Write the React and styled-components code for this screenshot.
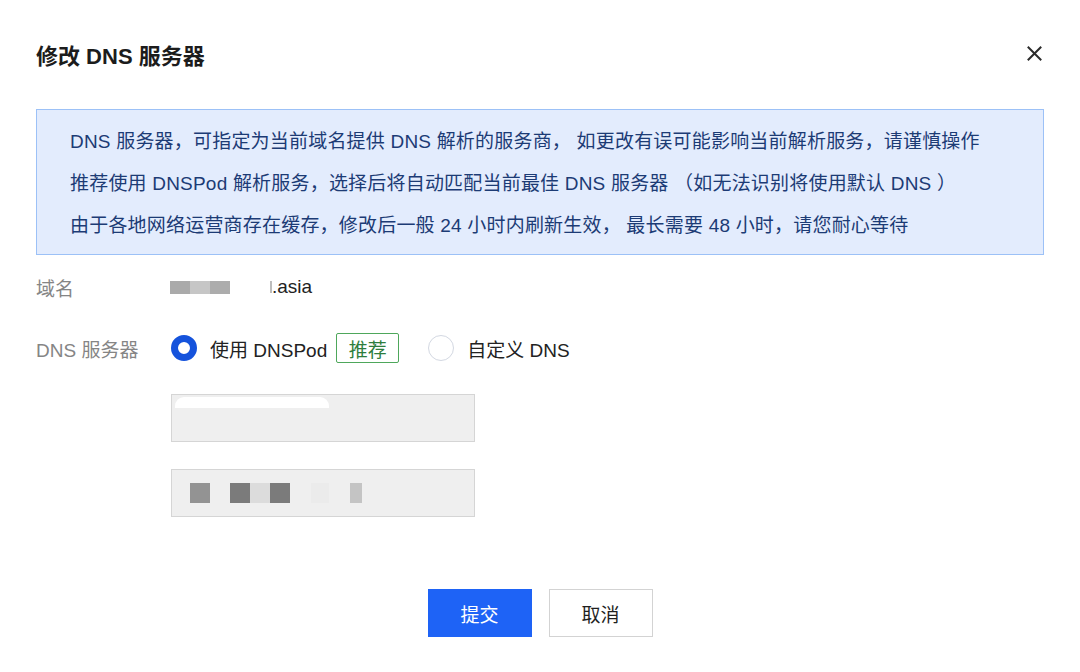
import React from "react";
import styled, { createGlobalStyle } from "styled-components";

const Global = createGlobalStyle`
  html, body { margin: 0; padding: 0; background: #fff; }
  body {
    font-family: "Liberation Sans", "Noto Sans CJK SC", sans-serif;
    color: #1f1f1f;
  }
`;

const Dialog = styled.div`
  width: 1080px;
  height: 672px;
  box-sizing: border-box;
  padding: 0 36px;
  display: flex;
  flex-direction: column;
`;

const Header = styled.div`
  height: 109px;
  display: flex;
  align-items: center;
  justify-content: space-between;
  padding-bottom: 2px;
  box-sizing: border-box;
`;

const Title = styled.h1`
  margin: 0;
  font-size: 22px;
  font-weight: 700;
  color: #1c1c1c;
`;

const Close = styled.button`
  border: 0;
  background: none;
  padding: 0;
  width: 16px;
  height: 16px;
  margin-right: 2px;
  display: flex;
  align-items: center;
  justify-content: center;
  cursor: pointer;
`;

const Notice = styled.div`
  border: 1px solid #9cc1f7;
  background: #e3ecfd;
  padding: 11px 33px 7px;
  color: #1c3b75;
  font-size: 19px;
  line-height: 42px;
  letter-spacing: 0.2px;
`;

const Line = styled.div`
  white-space: nowrap;
`;

const Form = styled.div`
  display: flex;
  flex-direction: column;
  margin-top: 14px;
`;

const Row = styled.div`
  display: flex;
  align-items: center;
  min-height: 36px;
  margin-bottom: ${(p) => p.$mb || 0}px;
`;

const Label = styled.div`
  width: 134px;
  flex: none;
  color: #858585;
  font-size: 19px;
`;

const Value = styled.div`
  display: flex;
  align-items: center;
  font-size: 19px;
  color: #222;
`;

const Blur = styled.span`
  display: inline-block;
  width: ${(p) => p.$w}px;
  height: ${(p) => p.$h || 13}px;
  background: ${(p) => p.$c};
  margin-left: ${(p) => p.$ml || 0}px;
  flex: none;
`;

const RadioGroup = styled.div`
  display: flex;
  align-items: center;
  padding-left: 1px;
`;

const RadioItem = styled.label`
  display: flex;
  align-items: center;
  font-size: 19px;
  color: #222;
  margin-right: ${(p) => p.$mr || 0}px;
  cursor: pointer;
`;

const RadioDot = styled.span`
  width: 26px;
  height: 26px;
  box-sizing: border-box;
  border-radius: 50%;
  border: ${(p) => (p.$checked ? "7px solid #1553dc" : "1.5px solid #d3d8e2")};
  background: #fff;
  margin-right: 13px;
  flex: none;
`;

const Tag = styled.span`
  display: inline-flex;
  align-items: center;
  justify-content: center;
  width: 63px;
  height: 30px;
  box-sizing: border-box;
  border: 1px solid #4ea75b;
  border-radius: 2px;
  color: #2e7d3c;
  font-size: 19px;
  margin-left: 9px;
`;

const Inputs = styled.div`
  display: flex;
  flex-direction: column;
  gap: 27px;
  margin-left: 135px;
  margin-top: 28px;
`;

const Input = styled.div`
  width: 304px;
  height: 48px;
  box-sizing: border-box;
  border: 1px solid #d5d5d5;
  background: #efefef;
  display: flex;
  align-items: ${(p) => (p.$top ? "flex-start" : "center")};
`;

const Smudge = styled.span`
  display: block;
  width: 154px;
  height: 11px;
  margin: 2px 0 0 3px;
  background: #fff;
  border-radius: 9px 9px 0 0;
`;

const Footer = styled.div`
  margin-top: auto;
  margin-bottom: 35px;
  display: flex;
  justify-content: center;
  gap: 17px;
`;

const Button = styled.button`
  width: 104px;
  height: 48px;
  box-sizing: border-box;
  font-family: inherit;
  font-size: 19px;
  border-radius: 0;
  cursor: pointer;
  border: 1px solid ${(p) => (p.$primary ? "#1e63f6" : "#d3d3d3")};
  background: ${(p) => (p.$primary ? "#1e63f6" : "#fff")};
  color: ${(p) => (p.$primary ? "#fff" : "#1f1f1f")};
`;

const pixels = [
  { w: 20, c: "#939393", ml: 18 },
  { w: 20, c: "#7b7b7b", ml: 20 },
  { w: 20, c: "#dcdcdc", ml: 0 },
  { w: 20, c: "#7b7b7b", ml: 0 },
  { w: 18, c: "#ebebeb", ml: 21 },
  { w: 12, c: "#c4c4c4", ml: 21 },
];

export default function App() {
  return (
    <>
      <Global />
      <Dialog>
        <Header>
          <Title>修改 DNS 服务器</Title>
          <Close aria-label="关闭">
            <svg width="15" height="15" viewBox="0 0 15 15">
              <path d="M1.5 1.5 L13.5 13.5 M13.5 1.5 L1.5 13.5" stroke="#2b2b2b" strokeWidth="2" strokeLinecap="square" fill="none" />
            </svg>
          </Close>
        </Header>
        <Notice>
          <Line>DNS 服务器，可指定为当前域名提供 DNS 解析的服务商， 如更改有误可能影响当前解析服务，请谨慎操作</Line>
          <Line>推荐使用 DNSPod 解析服务，选择后将自动匹配当前最佳 DNS 服务器 （如无法识别将使用默认 DNS ）</Line>
          <Line>由于各地网络运营商存在缓存，修改后一般 24 小时内刷新生效， 最长需要 48 小时，请您耐心等待</Line>
        </Notice>
        <Form>
          <Row $mb={25}>
            <Label>域名</Label>
            <Value>
              <Blur $w={20} $c="#aaaaaa" />
              <Blur $w={20} $c="#c6c6c6" />
              <Blur $w={20} $c="#acacac" />
              <Blur $w={2} $h={12} $c="#bdbdbd" $ml={40} />
              <span>.asia</span>
            </Value>
          </Row>
          <Row>
            <Label>DNS 服务器</Label>
            <RadioGroup>
              <RadioItem $mr={29}>
                <RadioDot $checked />
                使用 DNSPod
                <Tag>推荐</Tag>
              </RadioItem>
              <RadioItem>
                <RadioDot />
                自定义 DNS
              </RadioItem>
            </RadioGroup>
          </Row>
          <Inputs>
            <Input $top>
              <Smudge />
            </Input>
            <Input>
              {pixels.map((p, i) => (
                <Blur key={i} $w={p.w} $h={20} $c={p.c} $ml={p.ml} />
              ))}
            </Input>
          </Inputs>
        </Form>
        <Footer>
          <Button $primary>提交</Button>
          <Button>取消</Button>
        </Footer>
      </Dialog>
    </>
  );
}
